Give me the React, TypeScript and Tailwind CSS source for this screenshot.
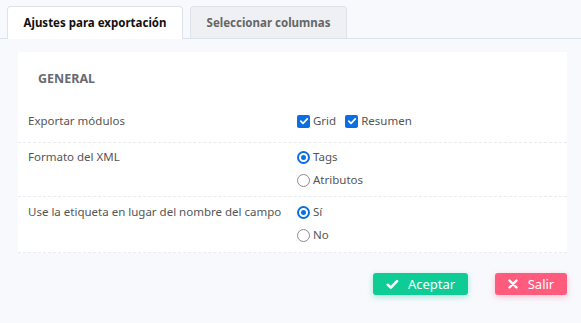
import React from "react";

function Check() {
  return (
    <span className="inline-flex h-[13px] w-[13px] items-center justify-center rounded-[2px] bg-[#0b6fe3]">
      <svg width="10" height="10" viewBox="0 0 10 10" fill="none">
        <path d="M1.8 5.2 L4 7.3 L8.3 2.8" stroke="white" strokeWidth="1.7" strokeLinecap="round" strokeLinejoin="round" />
      </svg>
    </span>
  );
}

function Radio({ on }: { on?: boolean }) {
  return on ? (
    <span className="inline-flex h-[13px] w-[13px] items-center justify-center rounded-full border-[2px] border-[#0b6fe3] bg-white">
      <span className="h-[5px] w-[5px] rounded-full bg-[#0b6fe3]" />
    </span>
  ) : (
    <span className="inline-block h-[13px] w-[13px] rounded-full border-[1.5px] border-[#8a8a93] bg-white" />
  );
}

export default function App() {
  return (
    <div
      className="h-[323px] w-[581px] bg-[#f8f9fd] text-[11.5px] leading-[16px] text-[#555]"
      style={{ fontFamily: '"Noto Sans", "Segoe UI", sans-serif' }}
    >
      <div className="flex gap-[7px] border-b border-[#d9e3ee] pl-[7px] pt-[6px]">
        <div className="mb-[-1px] flex h-[33px] w-[176px] items-center justify-center rounded-t-[4px] border border-b-0 border-[#dde3ea] bg-white text-[11.5px] font-bold text-[#111]">
          Ajustes para exportación
        </div>
        <div className="flex h-[32px] w-[157px] items-center justify-center rounded-t-[4px] border border-b-0 border-[#dde3ea] bg-[#eef0f4] text-[11.5px] font-bold text-[#666]">
          Seleccionar columnas
        </div>
      </div>
      <div className="pl-[18px] pr-[14px] pt-[13px]">
        <div className="w-[549px] bg-white">
          <div className="px-[20px] pb-[14px] pt-[19px] text-[12.5px] font-bold text-[#666b73]">GENERAL</div>
          <div className="flex h-[42px] items-start border-b border-dashed border-[#e9ebef] pl-[10px] pt-[12px]">
            <div className="w-[269px]">Exportar módulos</div>
            <div className="flex items-center gap-[9px]">
              <label className="flex items-center gap-[3px]"><Check /><span>Grid</span></label>
              <label className="flex items-center gap-[3px]"><Check /><span>Resumen</span></label>
            </div>
          </div>
          <div className="flex h-[54px] items-start border-b border-dashed border-[#e9ebef] pl-[10px] pt-[6px]">
            <div className="w-[269px]">Formato del XML</div>
            <div className="flex flex-col gap-[7px]">
              <label className="flex items-center gap-[3px]"><Radio on /><span>Tags</span></label>
              <label className="flex items-center gap-[3px]"><Radio /><span>Atributos</span></label>
            </div>
          </div>
          <div className="flex h-[56px] items-start border-b border-dashed border-[#e9ebef] pl-[10px] pt-[7px]">
            <div className="w-[269px]">Use la etiqueta en lugar del nombre del campo</div>
            <div className="flex flex-col gap-[7px]">
              <label className="flex items-center gap-[3px]"><Radio on /><span>Sí</span></label>
              <label className="flex items-center gap-[3px]"><Radio /><span>No</span></label>
            </div>
          </div>
        </div>
        <div className="flex justify-end gap-[27px] pt-[20px]">
          <button className="flex h-[22px] w-[95px] items-center justify-center gap-[9px] rounded-[3px] bg-[#0fcc96] text-[13px] text-white shadow-[0_2px_6px_rgba(15,204,150,0.35)]">
            <svg width="13" height="11" viewBox="0 0 13 11" fill="none">
              <path d="M1.8 5.8 L4.8 8.6 L11 2.2" stroke="white" strokeWidth="2.6" strokeLinecap="round" strokeLinejoin="round" />
            </svg>
            Aceptar
          </button>
          <button className="flex h-[22px] w-[72px] items-center justify-center gap-[10px] rounded-[3px] bg-[#ff5b7c] text-[13px] text-white shadow-[0_2px_6px_rgba(255,91,124,0.35)]">
            <svg width="10" height="10" viewBox="0 0 10 10" fill="none">
              <path d="M1.5 1.5 L8.5 8.5 M8.5 1.5 L1.5 8.5" stroke="white" strokeWidth="2.4" strokeLinecap="round" />
            </svg>
            Salir
          </button>
        </div>
      </div>
    </div>
  );
}
